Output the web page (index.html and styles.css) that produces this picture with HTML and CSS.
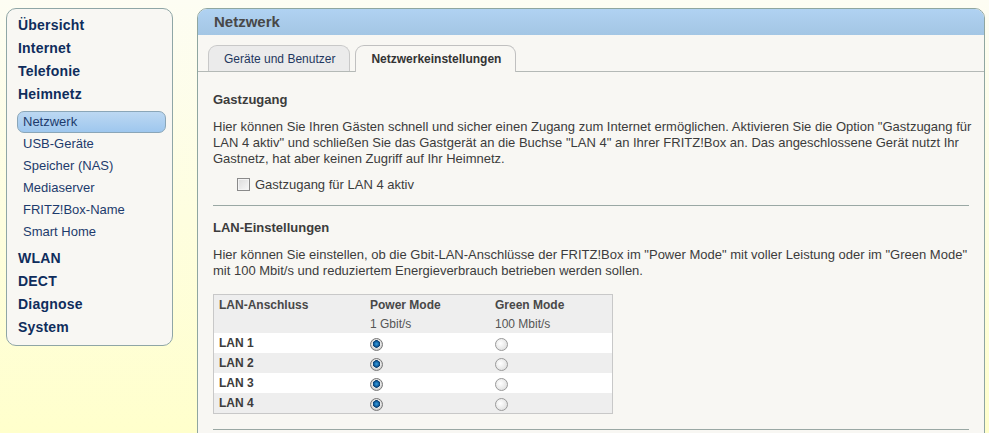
FILE: index.html
```html
<!DOCTYPE html>
<html lang="de">
<head>
    <meta charset="UTF-8">
    <title>FRITZ!Box - Netzwerk</title>
    <link rel="stylesheet" href="styles.css">
</head>
<body>
    <div class="page">
        <div class="menu">
            <a class="menu-main" href="#">Übersicht</a>
            <a class="menu-main" href="#">Internet</a>
            <a class="menu-main" href="#">Telefonie</a>
            <a class="menu-main" href="#">Heimnetz</a>
            <div class="submenu">
                <a class="menu-sub active" href="#">Netzwerk</a>
                <a class="menu-sub" href="#">USB-Geräte</a>
                <a class="menu-sub" href="#">Speicher (NAS)</a>
                <a class="menu-sub" href="#">Mediaserver</a>
                <a class="menu-sub" href="#">FRITZ!Box-Name</a>
                <a class="menu-sub" href="#">Smart Home</a>
            </div>
            <a class="menu-main" href="#">WLAN</a>
            <a class="menu-main" href="#">DECT</a>
            <a class="menu-main" href="#">Diagnose</a>
            <a class="menu-main" href="#">System</a>
        </div>

        <div class="panel">
            <div class="panel-head">Netzwerk</div>
            <div class="tabs">
                <a class="tab" href="#">Geräte und Benutzer</a>
                <a class="tab active" href="#">Netzwerkeinstellungen</a>
            </div>
            <div class="content">
                <h2>Gastzugang</h2>
                <p>Hier können Sie Ihren Gästen schnell und sicher einen Zugang zum Internet ermöglichen. Aktivieren Sie die Option "Gastzugang für LAN 4 aktiv" und schließen Sie das Gastgerät an die Buchse "LAN 4" an Ihrer FRITZ!Box an. Das angeschlossene Gerät nutzt Ihr Gastnetz, hat aber keinen Zugriff auf Ihr Heimnetz.</p>
                <label class="check-row">
                    <input type="checkbox" class="check">
                    Gastzugang für LAN 4 aktiv
                </label>
                <hr>

                <h2>LAN-Einstellungen</h2>
                <p>Hier können Sie einstellen, ob die Gbit-LAN-Anschlüsse der FRITZ!Box im "Power Mode" mit voller Leistung oder im "Green Mode" mit 100 Mbit/s und reduziertem Energieverbrauch betrieben werden sollen.</p>
                <table class="lan-table">
                    <thead>
                        <tr>
                            <th>LAN-Anschluss</th>
                            <th>Power Mode</th>
                            <th>Green Mode</th>
                        </tr>
                        <tr class="sub">
                            <th></th>
                            <th>1 Gbit/s</th>
                            <th>100 Mbit/s</th>
                        </tr>
                    </thead>
                    <tbody>
                        <tr>
                            <td class="port">LAN 1</td>
                            <td><input type="radio" class="radio" name="lan1" checked></td>
                            <td><input type="radio" class="radio" name="lan1"></td>
                        </tr>
                        <tr>
                            <td class="port">LAN 2</td>
                            <td><input type="radio" class="radio" name="lan2" checked></td>
                            <td><input type="radio" class="radio" name="lan2"></td>
                        </tr>
                        <tr>
                            <td class="port">LAN 3</td>
                            <td><input type="radio" class="radio" name="lan3" checked></td>
                            <td><input type="radio" class="radio" name="lan3"></td>
                        </tr>
                        <tr>
                            <td class="port">LAN 4</td>
                            <td><input type="radio" class="radio" name="lan4" checked></td>
                            <td><input type="radio" class="radio" name="lan4"></td>
                        </tr>
                    </tbody>
                </table>
                <hr>
            </div>
        </div>
    </div>
</body>
</html>
```

FILE: styles.css
```css
html, body {
    margin: 0;
    height: 100%;
}
body {
    font-family: 'Liberation Sans', Arial, sans-serif;
    font-size: 13px;
    color: #3c3c3c;
    background: linear-gradient(#fdfdf3, #ffffcc);
    overflow: hidden;
}
.page {
    display: flex;
    align-items: flex-start;
    padding: 8px 4px 0 6px;
    gap: 24px;
}

/* left menu */
.menu {
    width: 165px;
    flex-shrink: 0;
    background: #f8f7f3;
    border: 1px solid #8fa6a6;
    border-radius: 10px;
    padding: 5px 0 6px;
    display: flex;
    flex-direction: column;
}
.menu a {
    text-decoration: none;
}
.menu-main {
    font-size: 14px;
    letter-spacing: 0.2px;
    font-weight: bold;
    color: #0f2d5c;
    line-height: 23px;
    padding-left: 11px;
}
.submenu {
    display: flex;
    flex-direction: column;
    padding: 5px 6px 4px 10px;
}
.menu-sub {
    font-size: 13px;
    color: #1d3b6c;
    line-height: 20px;
    padding: 0 0 0 5px;
    border: 1px solid transparent;
    border-radius: 7px;
}
.menu-sub.active {
    background: linear-gradient(#bcd8f2, #9ec7ee);
    border-color: #8aa6b8;
}

/* main panel */
.panel {
    flex: 1;
    background: #f8f7f3;
    border: 1px solid #8fa6a0;
    border-radius: 10px 10px 0 0;
    min-height: 460px;
}
.panel-head {
    height: 26px;
    line-height: 26px;
    padding-left: 16px;
    font-size: 15px;
    font-weight: bold;
    color: #484848;
    background: linear-gradient(#b0d2f2, #a3c6e4);
    border-radius: 9px 9px 0 0;
}
.tabs {
    display: flex;
    gap: 5px;
    padding: 10px 0 0 10px;
    border-bottom: 1px solid #b4b9b6;
}
.tab {
    display: block;
    height: 25px;
    line-height: 26px;
    padding: 0 14px 0 15px;
    margin-bottom: -1px;
    border: 1px solid #c8c8c8;
    border-bottom: none;
    border-radius: 9px 9px 0 0;
    background: #ebebeb;
    color: #1f3760;
    text-decoration: none;
    font-size: 12px;
}
.tab.active {
    background: #f8f7f3;
    color: #333;
    font-weight: bold;
    height: 26px;
    border-color: #c0c0c0;
}

.content {
    padding: 20px 10px 0 15px;
}
h2 {
    margin: 0 0 11px;
    font-size: 13px;
    line-height: 16px;
    font-weight: bold;
    color: #3c3c3c;
}
p {
    margin: 0 0 8px;
    line-height: 16px;
}
.check-row {
    display: flex;
    align-items: center;
    gap: 5px;
    height: 18px;
    padding-left: 24px;
}
.check {
    appearance: none;
    width: 13px;
    height: 13px;
    margin: 0;
    border: 1px solid #8a8a8a;
    background: linear-gradient(135deg, #dcdcdc, #f8f8f8);
    box-shadow: inset 0 0 0 1px #f4f4f4;
}
hr {
    border: none;
    border-top: 1px solid #9aa8a4;
    margin: 12px 5px 14px 0;
}

/* lan table */
.lan-table {
    width: 400px;
    border-collapse: collapse;
    border: 1px solid #c8c8c8;
    margin: 15px 0 15px;
}
.lan-table th,
.lan-table td {
    text-align: left;
    padding: 0 0 0 5px;
    height: 20px;
    font-size: 12px;
}
.lan-table th {
    height: 19px;
    background: #eeeeee;
    font-weight: bold;
    color: #484848;
}
.lan-table tr.sub th {
    font-weight: normal;
    color: #555;
}
.lan-table th:first-child {
    width: 146px;
}
.lan-table th:nth-child(2) {
    width: 120px;
}
.lan-table tbody tr:nth-child(odd) {
    background: #ffffff;
}
.lan-table tbody tr:nth-child(even) {
    background: #eeeeee;
}
.port {
    font-weight: bold;
    color: #3c3c3c;
}
.radio {
    appearance: none;
    width: 13px;
    height: 13px;
    margin: 3px 0 0 0;
    border-radius: 50%;
    border: 1px solid #9a9a9a;
    background: radial-gradient(circle at 40% 40%, #ffffff, #d8d8d8);
    vertical-align: top;
}
.radio:checked {
    border-color: #7a7a7a;
    background: radial-gradient(circle at 50% 45%, #3aa0e0 0, #0e5c9c 2.5px, #0a3b6a 3.5px, #e8e8e8 4px, #c8c8c8 6px);
}
```
